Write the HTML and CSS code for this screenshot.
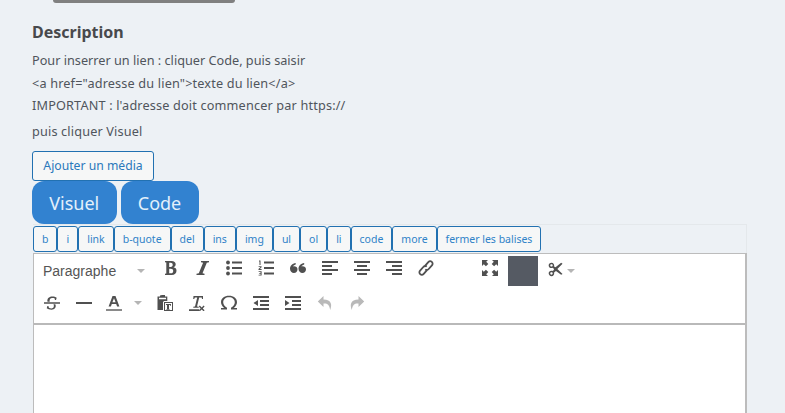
FILE: index.html
```html
<!DOCTYPE html>
<html lang="fr">
<head>
<meta charset="utf-8">
<title>Description</title>
<link rel="stylesheet" href="styles.css">
</head>
<body>
<div class="topbar"></div>
<main class="content">
  <h2 class="title">Description</h2>
  <p class="help">Pour inserrer un lien : cliquer Code, puis saisir<br><span class="wide">&lt;a href="adresse du lien"&gt;texte du lien&lt;/a&gt;</span><br><span class="wide">IMPORTANT : l'adresse doit commencer par https://</span></p>
  <p class="help after"><span class="wide">puis cliquer Visuel</span></p>
  <button class="media">Ajouter un média</button>
  <div class="tabs"><button class="tab">Visuel</button><button class="tab">Code</button></div>
  <div class="quicktags">
    <button class="qt">b</button><button class="qt">i</button><button class="qt">link</button><button class="qt">b-quote</button><button class="qt">del</button><button class="qt">ins</button><button class="qt">img</button><button class="qt">ul</button><button class="qt">ol</button><button class="qt">li</button><button class="qt">code</button><button class="qt">more</button><button class="qt">fermer les balises</button>
  </div>
  <div class="editor">
    <div class="toolbar">
      <div class="row one">
        <div class="format">Paragraphe<span class="caret"></span></div>
        <span class="ic"><svg viewBox="0 0 16 16"><path d="M3 1h6.400c2.800 0 4.300 1.300 4.300 3.300 0 1.500-.9 2.600-2.200 3 1.800.3 3 1.500 3 3.400 0 2.500-1.800 4.300-4.800 4.300H3v-1.300l1.300-.3V2.600L3 2.300zM7.200 2.800v4.100h1.400c1.500 0 2.100-.8 2.100-2.100s-.7-2-2.100-2zm0 5.900v4.500h1.700c1.500 0 2.300-.8 2.300-2.300s-.9-2.200-2.500-2.200z"/></svg></span>
        <span class="ic"><svg viewBox="0 0 16 16"><path d="M7 1h8v1.300l-2.200.4L8.500 13.300l2 .4V15H2.500v-1.300l2.300-.4L9.100 2.700l-2.100-.4z"/></svg></span>
        <span class="ic"><svg viewBox="0 0 16 16"><circle cx="2" cy="2.500" r="1.900"/><circle cx="2" cy="8" r="1.900"/><circle cx="2" cy="13.500" r="1.900"/><path d="M6 1.500h10v2H6zM6 7h10v2H6zM6 12.500h10v2H6z"/></svg></span>
        <span class="ic"><svg viewBox="0 0 16 16"><path d="M6 1.500h10v2H6zM6 7h10v2H6zM6 12.500h10v2H6z"/><path d="M1 .5h1.500V5H1.500V1.500H1zM.6 6.300h3v.9L1.800 9h1.800v.9H.5V9l2-1.900H.6zM.6 11.200h3v4.300h-3v-.8h2v-.9H1.200v-.8h1.300v-.9H.6z"/></svg></span>
        <span class="ic"><svg viewBox="0 0 16 16"><path d="M7.500 9.300c0 2.200-1.500 3.700-3.600 3.700S0 11.300 0 8.800C0 5.700 2.200 3.500 5.700 3v1.400C4 5 3.100 5.900 3 6.400c2.100-.7 4.500.6 4.500 2.900zM16 9.300c0 2.200-1.500 3.700-3.600 3.700s-3.900-1.700-3.900-4.200c0-3.100 2.200-5.300 5.700-5.800v1.400c-1.700.6-2.600 1.500-2.700 2 2.100-.7 4.500.6 4.500 2.900z"/></svg></span>
        <span class="ic"><svg viewBox="0 0 16 16"><path d="M0 1h16v2H0zM0 5h10v2H0zM0 9h16v2H0zM0 13h10v2H0z"/></svg></span>
        <span class="ic"><svg viewBox="0 0 16 16"><path d="M0 1h16v2H0zM3 5h10v2H3zM0 9h16v2H0zM3 13h10v2H3z"/></svg></span>
        <span class="ic"><svg viewBox="0 0 16 16"><path d="M0 1h16v2H0zM6 5h10v2H6zM0 9h16v2H0zM6 13h10v2H6z"/></svg></span>
        <span class="ic"><svg viewBox="0 0 16 16" class="line"><path d="M6.800 6.200 10.300 2.200c1-1.100 2.500-1.200 3.500-.3s1.100 2.400.1 3.500L10.700 9c-1 1.100-2.500 1.200-3.400.4M9.200 9.800 5.700 13.800c-1 1.100-2.500 1.200-3.500.3s-1.100-2.400-.1-3.500L5.300 7c1-1.100 2.500-1.200 3.400-.4"/></svg></span>
        <span class="ic"></span>
        <span class="ic"><svg viewBox="0 0 16 16"><path d="M0 0h6L4.200 1.800 6.300 3.900 3.900 6.300 1.800 4.200 0 6zM16 0v6l-1.800-1.800-2.100 2.100-2.400-2.400 2.100-2.100L10 0zM0 16v-6l1.800 1.800 2.100-2.100 2.400 2.400-2.100 2.100L6 16zM16 16h-6l1.800-1.800-2.100-2.100 2.400-2.400 2.100 2.100L16 10z"/></svg></span>
        <span class="swatch"></span>
        <span class="ic small"><svg viewBox="0 0 16 16"><path fill-rule="evenodd" d="M15.500 1.800 14 .8 8 5.700 6.500 4.800C7 2.700 5.800.8 3.800.8 2 .8.700 2 .700 3.600.7 5.300 2 6.500 3.800 6.500c.5 0 1-.1 1.400-.3L6.500 7.800 5.300 9.600C4.800 9.400 4.300 9.300 3.800 9.300 2 9.300.7 10.500.7 12.100s1.300 3.100 3.100 3.100c2 0 3.200-1.900 2.700-4l2-1.500 5.500 4 1.500-.9-5.500-5.300zM3.700 2.500c.9 0 1.300.5 1.300 1.100 0 .7-.5 1.200-1.300 1.200S2.400 4.300 2.400 3.600c0-.6.500-1.100 1.300-1.100zM3.700 11c.9 0 1.300.5 1.300 1.100 0 .8-.5 1.400-1.300 1.400s-1.300-.6-1.300-1.300c0-.7.500-1.200 1.300-1.200z"/></svg></span>
        <span class="caret tight"></span>
      </div>
      <div class="row two">
        <span class="ic first"><svg viewBox="0 0 16 16"><path d="M3.500 6.800C2.800 3.900 4.800 1.500 8.200 1.500c1.900 0 3.400.5 4.500 1.300l-.7 2.200h-1l-.5-1.700C9.900 3 9.100 2.900 8.200 2.900 6.200 2.900 5.300 4.500 5.700 6.800zM0 7.300h16v1.400H0zM11.300 9.300c1.400 3-.6 5.400-3.800 5.400-1.900 0-3.700-.5-4.800-1.400l.7-2.300h1l.5 1.800c.7.400 1.600.6 2.600.6 2.100 0 3-1.800 2-4.100z"/></svg></span>
        <span class="ic"><svg viewBox="0 0 16 16"><path d="M0 7h16v2H0z"/></svg></span>
        <span class="color">
          <svg viewBox="0 0 16 16"><path fill-rule="evenodd" d="M6.500 1h3l3.900 10.500h-2.300l-.9-2.600H5.800l-.9 2.600H2.600zM8 3.200 6.400 7.300h3.200z"/><path class="under" d="M0 14h16v2H0z"/></svg>
          <span class="caret"></span>
        </span>
        <span class="ic"><svg viewBox="0 0 16 16"><path fill-rule="evenodd" d="M5 0h3v1.500h2.300V6H7.200A1.500 1.500 0 0 0 6 7.200V15H.5V1.500H3V.5zM2 2.700v1.600h7V2.700z"/><path fill-rule="evenodd" d="M7 7h9v9H7zM8 8v7h7V8z"/><path d="M9 9h5v1.800h-.8l-.2-.8h-1v4l.7.2v.5H9.300v-.5l.7-.2v-4H9l-.2.800H8.900z"/></svg></span>
        <span class="ic"><svg viewBox="0 0 16 16"><path d="M4.500 1H14v3h-1l-.3-1.500H10.200L8 11.500l1.700.3v.9H4.300v-.9l1.700-.3L8.200 2.500H5.900L5.200 4h-1zM0 14.200h10V16H0zM10.800 10.500 12.700 12.400l1.900-1.900 1 1-1.900 1.900 1.900 1.900-1 1-1.900-1.900-1.900 1.900-1-1 1.900-1.900-1.900-1.900z"/></svg></span>
        <span class="ic"><svg viewBox="0 0 16 16"><path d="M0 14.500V13h3.200C1.300 11.500 0 9.500 0 7.300 0 3.400 3.400.8 8 .8s8 2.600 8 6.500c0 2.200-1.300 4.200-3.200 5.700H16v1.500h-6v-1.700c2-1.300 3.800-3 3.800-5.500 0-2.900-2.400-5-5.800-5S2.200 4.400 2.200 7.300c0 2.500 1.800 4.200 3.800 5.500v1.700z"/></svg></span>
        <span class="ic"><svg viewBox="0 0 16 16"><path d="M0 1h16v2H0zM7 5h9v2H7zM7 9h9v2H7zM0 13h16v2H0zM5 5v6L.5 8z"/></svg></span>
        <span class="ic"><svg viewBox="0 0 16 16"><path d="M0 1h16v2H0zM7 5h9v2H7zM7 9h9v2H7zM0 13h16v2H0zM0 5v6l4.500-3z"/></svg></span>
        <span class="ic muted"><svg viewBox="0 0 16 16"><path d="M6.500 1 .8 6.500l5.700 5.500V8.500c3.500-.3 5.700.5 6.700 6.500 2-5.500 1.500-10-6.700-10.500z"/></svg></span>
        <span class="ic muted"><svg viewBox="0 0 16 16"><path d="M9.500 1l5.700 5.500-5.700 5.500V8.500C6 8.200 3.800 9 2.800 15 .8 9.500 1.300 5 9.500 4.500z"/></svg></span>
      </div>
    </div>
    <div class="area"></div>
  </div>
</main>
</body>
</html>
```
FILE: styles.css
```css
* { box-sizing: border-box; }
html, body { margin: 0; height: 413px; overflow: hidden; }
body {
  background: #edf1f5;
  color: #50555c;
  font-family: "Noto Sans", sans-serif;
}
.topbar {
  width: 182px;
  height: 3px;
  margin-left: 53px;
  background: #808080;
  border-radius: 0 0 8px 8px;
}
.content { padding: 20px 0 0 32px; }
.title {
  margin: 0 0 8px;
  font-size: 16px;
  line-height: 18px;
  font-weight: 700;
  color: #48494c;
}
.help {
  margin: 0;
  font-size: 12.700px;
  line-height: 22.500px;
}
.wide { letter-spacing: .16px; }
.help.after { margin-top: 3px; }
.media {
  display: block;
  width: 122px;
  height: 30px;
  margin-top: 9px;
  padding: 0;
  border: 1px solid #2271b1;
  border-radius: 3px;
  background: #f6f7f7;
  color: #2a78bb;
  font: 12.200px/1 "Noto Sans", sans-serif;
}
.tabs { display: flex; gap: 4px; }
.tab {
  height: 43px;
  padding: 0 17.250px;
  border: 0;
  border-radius: 12px;
  background: #3282d0;
  color: #e3f0fb;
  font: 18px/1 "Noto Sans", sans-serif;
}
.quicktags {
  display: flex;
  width: 714px;
  height: 29px;
  margin-left: 1px;
  padding-top: 1px;
  border: solid #e4e8eb;
  border-width: 1px 1px 0 0;
  align-items: flex-start;
}
.qt {
  height: 26px;
  padding: 0 8px;
  border: 1px solid #2271b1;
  border-radius: 3px;
  background: #f6f7f7;
  color: #2f82c8;
  font: 10.500px/1 "Noto Sans", sans-serif;
}
.editor {
  width: 714px;
  height: 170px;
  margin-left: 1px;
  border: solid #bcbcbc;
  border-width: 1px 2px 0 1px;
  background: #fff;
}
.toolbar {
  height: 71px;
  border-bottom: 2px solid #b9b9b9;
}
.row {
  display: flex;
  align-items: center;
  color: #505050;
}
.row.one { height: 28px; }
.row.two { height: 32px; margin-top: 5px; }
.format {
  display: flex;
  align-items: center;
  width: 120px;
  padding: 6px 0 0 9px;
  color: #555;
  font: 14px/1 "Liberation Sans", sans-serif;
}
.caret {
  width: 0;
  height: 0;
  margin-left: 21px;
  border: solid transparent;
  border-width: 4px 4px 0;
  border-top-color: #b5b5b5;
}
.caret.tight { margin: 6px 0 0 0; }
.ic {
  display: flex;
  flex: none;
  align-items: center;
  justify-content: center;
  width: 32px;
  height: 32px;
}
.ic svg, .color svg { width: 16px; height: 16px; fill: currentColor; }
.ic svg.line { fill: none; stroke: currentColor; stroke-width: 1.800; }
.small { width: 24px; margin: 3px 0 0 5px; }
.small svg { width: 15px; height: 15px; }
.swatch { flex: none; width: 30px; height: 30px; margin: 6px 0 0 2px; background: #555a63; }
.first { margin-left: 2px; }
.color { display: flex; align-items: center; width: 49px; padding-left: 6px; }
.color .caret { margin-left: 12px; }
.under { fill: #8a8a8a; }
.muted { color: #b9b9b9; }
.area { height: 98px; background: #fff; }
```
